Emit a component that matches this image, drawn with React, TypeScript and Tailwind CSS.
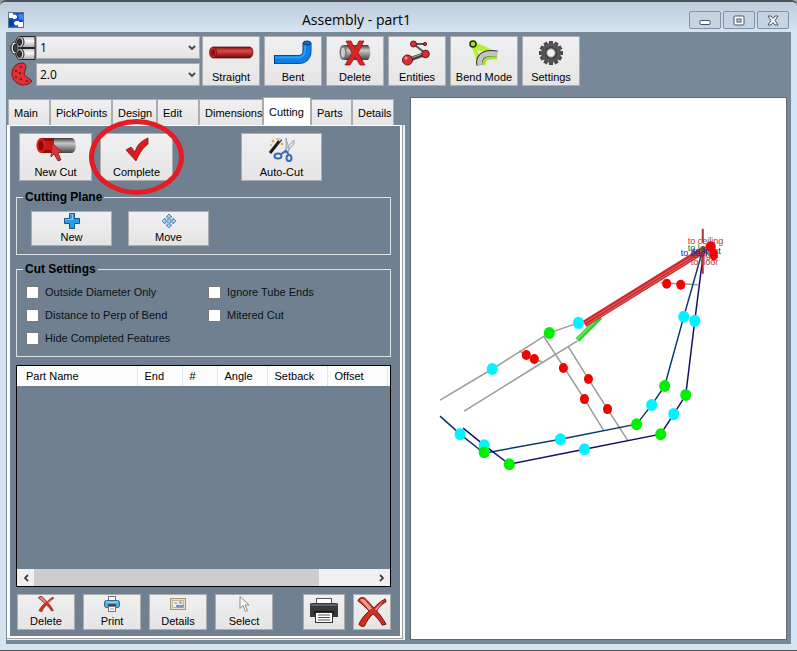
import { useState, type ReactNode } from 'react';

const TABS = [
  { name: 'Main', width: 'w-[42px]' },
  { name: 'PickPoints', width: 'w-[62px]' },
  { name: 'Design', width: 'w-[45px]' },
  { name: 'Edit', width: 'w-[42px]' },
  { name: 'Dimensions', width: 'w-[64px]' },
  { name: 'Cutting', width: 'w-[48px]' },
  { name: 'Parts', width: 'w-[41px]' },
  { name: 'Details', width: 'w-[42px]' },
];

const COLUMNS = [
  { name: 'Part Name', width: 'w-[120px]' },
  { name: 'End', width: 'w-[45px]' },
  { name: '#', width: 'w-[35px]' },
  { name: 'Angle', width: 'w-[50px]' },
  { name: 'Setback', width: 'w-[60px]' },
  { name: 'Offset', width: 'w-[60px]' },
];

const CUT_SETTINGS = [
  'Outside Diameter Only',
  'Ignore Tube Ends',
  'Distance to Perp of Bend',
  'Mitered Cut',
  'Hide Completed Features',
];

const GREEN_NODES = [[549, 333], [484, 452], [509, 464], [636, 424], [660, 434], [664, 386], [685, 395]];
const CYAN_NODES = [
  [578, 323], [492, 369], [460, 434], [484, 445], [560, 439],
  [584, 449], [651, 405], [673, 414], [683, 317], [694, 321],
];
const RED_NODES = [[526, 355], [534, 359], [563, 368], [588, 379], [584, 399], [607, 409], [666, 284], [680, 285]];

/* ---------- icons ---------- */

function AppIcon() {
  return (
    <svg className="size-4" viewBox="0 0 16 16">
      <rect x=".5" y=".5" width="15" height="15" fill="#1450c8" stroke="#5d6f8c" />
      <path d="M1 1h4v2c2-1 4 0 4 2 0 1-1 2-2 2H5V6H1z" fill="#fff" />
      <path d="M15 15h-5v-2c-2 1-4 0-4-2 0-1 1-2 3-2h2v1h4z" fill="#fff" />
      <path d="M1 8h3l2 2-1 4H1z" fill="#0a39a8" />
      <path d="M10 2h5v6l-4-1z" fill="#3d86ee" />
    </svg>
  );
}

function TubesIcon() {
  return (
    <svg className="h-6 w-[26px]" viewBox="0 0 26 24">
      <defs>
        <linearGradient id="steel" x1="0" y1="0" x2="0" y2="1">
          <stop offset="0" stopColor="#bdbdbd" />
          <stop offset=".4" stopColor="#fafafa" />
          <stop offset="1" stopColor="#a6a6a6" />
        </linearGradient>
      </defs>
      <g stroke="#222">
        <ellipse cx="4.500" cy="12" rx="3.500" ry="6" fill="#ddd" />
        <ellipse cx="5" cy="12" rx="1.500" ry="4" fill="#444" />
        <path d="M10 .5h15v11H10z" fill="url(#steel)" />
        <path d="M10 12.500h15v11H10z" fill="url(#steel)" />
        <ellipse cx="10" cy="6" rx="4" ry="5.500" fill="#ccc" />
        <ellipse cx="9.500" cy="6" rx="2" ry="3.500" fill="#333" />
        <ellipse cx="10" cy="18" rx="4" ry="5.500" fill="#ccc" />
        <ellipse cx="9.500" cy="18" rx="2" ry="3.500" fill="#333" />
      </g>
    </svg>
  );
}

function DieIcon() {
  return (
    <svg className="h-6 w-[26px]" viewBox="0 0 26 24">
      <path d="M12 1c3 0 4 2 4 4l-2 7c1 3 5 4 8 7-2 3-6 4-10 4C6 22 2 17 2 12 2 6 6 1 12 1z" fill="#e0303a" stroke="#7c1418" />
      <g fill="#6d0f14">
        <circle cx="11" cy="5" r="1" /><circle cx="6" cy="9" r="1" /><circle cx="10" cy="11" r="1" />
        <circle cx="6" cy="15" r="1" /><circle cx="11" cy="17" r="1" /><circle cx="17" cy="19" r="1" />
      </g>
    </svg>
  );
}

function StraightIcon() {
  return (
    <svg className="h-[26px] w-[46px]" viewBox="0 0 46 26">
      <defs>
        <linearGradient id="redTube" x1="0" y1="0" x2="0" y2="1">
          <stop offset="0" stopColor="#7e1010" />
          <stop offset=".35" stopColor="#e04848" />
          <stop offset="1" stopColor="#6b0808" />
        </linearGradient>
      </defs>
      <path d="M5 7h37c4 1 4 9 0 11H5z" fill="url(#redTube)" stroke="#5c0b0b" strokeWidth=".7" />
      <ellipse cx="5" cy="12.500" rx="3.500" ry="5.500" fill="#c22b2b" stroke="#5c0b0b" strokeWidth=".7" />
      <ellipse cx="5" cy="12.500" rx="2" ry="3.500" fill="#8a1111" />
    </svg>
  );
}

function BentIcon() {
  return (
    <svg className="h-[26px] w-[42px]" viewBox="0 0 42 26">
      <path d="M2 19.500h24c6 0 9-3 9-9V3" fill="none" stroke="#0b3c78" strokeWidth="9" />
      <path d="M3 19.500h23c6 0 9-3 9-9V3" fill="none" stroke="#0c80e4" strokeWidth="7.500" />
      <path d="M3 17.500h23c4 0 7-3 7-7V4" fill="none" stroke="#2a9cf5" strokeWidth="2" />
      <ellipse cx="35" cy="3" rx="4" ry="2" fill="#1667b8" stroke="#0b3c78" />
    </svg>
  );
}

function DeleteTubeIcon() {
  return (
    <svg className="h-[26px] w-8" viewBox="0 0 32 26">
      <defs>
        <linearGradient id="grayTube" x1="0" y1="0" x2="0" y2="1">
          <stop offset="0" stopColor="#3a3a3a" />
          <stop offset=".35" stopColor="#c9c9c9" />
          <stop offset="1" stopColor="#444" />
        </linearGradient>
      </defs>
      <path d="M4 5h25c3 3 3 12 0 15H4z" fill="url(#grayTube)" />
      <ellipse cx="4" cy="12.500" rx="3.500" ry="7.500" fill="#777" />
      <ellipse cx="4" cy="12.500" rx="2" ry="5" fill="#ccc" />
      <path d="M7 1h5l4 8 4-8h5l-6 12 7 12h-5l-5-8-5 8H6l7-12z" fill="#dc2424" stroke="#8d1010" strokeWidth=".7" />
    </svg>
  );
}

function EntitiesIcon() {
  return (
    <svg className="h-[26px] w-8" viewBox="0 0 32 26">
      <path d="M13 4h11M14 5l11 9" fill="none" stroke="#555" strokeWidth="2" />
      <path d="M7 20l17-6" stroke="#444" strokeWidth="4" />
      <path d="M7 19l17-6" stroke="#aaa" strokeWidth="1" />
      <g fill="#d93038" stroke="#6d1014">
        <circle cx="6.500" cy="20" r="5" /><circle cx="24.500" cy="14" r="3.800" />
        <circle cx="12.500" cy="4" r="3" /><circle cx="24" cy="4" r="1.600" />
      </g>
      <circle cx="5" cy="18" r="1.500" fill="#ff8d8d" />
    </svg>
  );
}

function BendModeIcon() {
  return (
    <svg className="h-[26px] w-8" viewBox="0 0 32 26">
      <path d="M3 5l7 20 4-8L29 12 7 2z" fill="#b4ee38" />
      <path d="M9 10l3 8 7-5z" fill="#ececec" />
      <path d="M12 25c-2-9 5-13 17-11" fill="none" stroke="#333" strokeWidth="7" />
      <path d="M12 25c-2-9 5-13 17-11" fill="none" stroke="#c4c4c4" strokeWidth="5" />
      <path d="M16 25c-1-6 4-8 13-7" fill="none" stroke="#a6e22a" strokeWidth="3" />
      <circle cx="5" cy="4" r="3" fill="#a6e22a" stroke="#22330a" strokeWidth="1.500" />
    </svg>
  );
}

function GearIcon() {
  const teeth = Array.from({ length: 12 }, (_, i) => i * 30);
  return (
    <svg className="size-[26px]" viewBox="0 0 26 26">
      <g fill="#4a4a4a">
        {teeth.map((a) => <rect key={a} x="11" y="1" width="4" height="6" transform={`rotate(${a} 13 13)`} />)}
      </g>
      <circle cx="13" cy="13" r="10" fill="#555" />
      <circle cx="13" cy="13" r="6" fill="#3b3b3b" />
      <circle cx="13" cy="13" r="4.200" fill="#f0f0f0" stroke="#999" />
    </svg>
  );
}

function NewCutIcon() {
  return (
    <svg className="h-[26px] w-[42px]" viewBox="0 0 42 26">
      <path d="M17 2h20c5 1 5 14 0 15H17z" fill="url(#grayTube)" />
      <path d="M6 2h13v15H6z" fill="#c41a1a" />
      <path d="M6 2h13v3H6zM6 14h13v3H6z" fill="#8e0d0d" />
      <ellipse cx="6" cy="9.500" rx="4.500" ry="7.500" fill="#dc1b1b" />
      <ellipse cx="6" cy="9.500" rx="2.500" ry="5" fill="#8a0a0a" />
      <path d="M17 7l10 9-4 1 3 7-3 1-4-7-3 3z" fill="#d8343a" stroke="#7d2020" strokeWidth=".8" />
    </svg>
  );
}

function CheckIcon() {
  return (
    <svg className="h-[26px] w-6" viewBox="0 0 24 26">
      <path d="M1 14l5-3 4 5c2-7 6-11 13-14v6c-5 4-8 8-12 17z" fill="#dc1c20" stroke="#85161a" strokeWidth=".8" />
    </svg>
  );
}

function AutoCutIcon() {
  return (
    <svg className="h-[26px] w-7" viewBox="0 0 28 26">
      <path d="M2 17L13 3" stroke="#1c1c1c" strokeWidth="3" />
      <path d="M11 5l2-3" stroke="#ddd" strokeWidth="2" />
      <g fill="#e8a552">
        <circle cx="5" cy="5" r="1.500" /><circle cx="9" cy="3" r="1" /><circle cx="14" cy="8" r="1.300" /><circle cx="3" cy="9" r="1" />
      </g>
      <path d="M18 2v12l2 3 1-4zM26 4L15 16l3 1 8-9z" fill="#dbe3ea" stroke="#8594a3" strokeWidth=".8" />
      <g fill="none" stroke="#3769bd" strokeWidth="2">
        <ellipse cx="10" cy="20" rx="3.500" ry="2.500" /><ellipse cx="21" cy="22" rx="2.500" ry="3" />
        <path d="M13 18l5-3 3 4" />
      </g>
    </svg>
  );
}

function PlusIcon() {
  return (
    <svg className="size-4" viewBox="0 0 16 16">
      <path d="M5.500.5h5v5h5v5h-5v5h-5v-5h-5v-5h5z" fill="#2f9be0" stroke="#12588f" />
      <path d="M6.500 1.500h2v5h-7v1" fill="none" stroke="#83cdf5" />
    </svg>
  );
}

function MoveIcon() {
  return (
    <svg className="size-4" viewBox="0 0 16 16">
      <path
        d="M8 1l3 3H9v3h3V5l3 3-3 3V9H9v3h2l-3 3-3-3h2V9H4v2L1 8l3-3v2h3V4H5z"
        fill="#a8d0ee" stroke="#4c83b2" strokeWidth=".9"
      />
    </svg>
  );
}

function CrossIcon({ className }: { className: string }) {
  return (
    <svg className={className} viewBox="0 0 32 32">
      <path d="M1 4c1-3 4-4 7-3 4 4 7 7 10 11 3-4 7-7 12-10l1 3c-5 3-8 6-10 10 4 4 7 9 10 14l-4 1c-3-5-6-9-10-12-4 4-7 8-9 13-2 1-5 0-6-2 3-6 6-10 11-14C9 11 5 7 1 4z" fill="#d3301f" stroke="#5e120c" />
      <path d="M3 3c2-1 3-1 5 0l8 9-3 2C10 10 7 7 3 3zM28 4L19 13l2 1z" fill="#ef9b90" />
    </svg>
  );
}

function PrintIcon() {
  return (
    <svg className="size-4" viewBox="0 0 16 16">
      <rect x="4.500" y=".5" width="7" height="5" fill="#fff" stroke="#777" />
      <rect x=".5" y="4.500" width="15" height="7" rx="2" fill="#58a9d4" stroke="#286a93" />
      <path d="M2 6h12" stroke="#b8e2f6" />
      <rect x="4" y="8" width="8" height="2" fill="#24506b" />
      <rect x="4.500" y="10.500" width="7" height="5" fill="#fff" stroke="#777" />
      <path d="M6 13h4" stroke="#999" />
    </svg>
  );
}

function CardIcon() {
  return (
    <svg className="size-4" viewBox="0 0 16 16">
      <rect x=".5" y="2.500" width="15" height="11" fill="#e8dfc8" stroke="#a8977a" />
      <rect x="2.500" y="4.500" width="11" height="7" fill="#f6f1e4" stroke="#c4b597" />
      <circle cx="10.500" cy="6.500" r="1.500" fill="#b3a180" />
      <path d="M4 7h3M6 10l2-1 2 1 3-1v2H7z" stroke="#5d8fb5" fill="#8cb2cd" />
    </svg>
  );
}

function PointerIcon() {
  return (
    <svg className="size-4" viewBox="0 0 16 16">
      <path d="M4 .5v12l3-3 2.500 6 2-1L9 9h4z" fill="#fff" stroke="#888" />
    </svg>
  );
}

function BigPrinterIcon() {
  return (
    <svg className="h-7 w-[30px]" viewBox="0 0 30 28">
      <rect x="7.500" y=".5" width="15" height="7" fill="#fff" stroke="#555" />
      <path d="M1 7c0-2 1-2 3-2h22c2 0 3 0 3 2v12H1z" fill="#383838" />
      <path d="M2 7h26" stroke="#8b8b8b" />
      <rect x="5" y="13" width="20" height="3" fill="#111" />
      <rect x="6.500" y="14.500" width="17" height="10" fill="#fff" stroke="#333" />
      <path d="M9 17h12M9 19.500h12M9 22h12" stroke="#555" />
    </svg>
  );
}

/* ---------- controls ---------- */

interface ToolButtonProps {
  icon: ReactNode;
  label?: string;
  ariaLabel?: string;
  className: string;
}

function ToolButton({ icon, label, ariaLabel, className }: ToolButtonProps) {
  return (
    <button
      type="button"
      aria-label={ariaLabel}
      className={`flex shrink-0 flex-col items-center border border-[#adadad] bg-linear-to-b from-[#f0f0f0] to-[#e5e5e5] text-black ${className}`}
    >
      <span className="flex flex-1 items-center justify-center">{icon}</span>
      {label && <span className="h-4 leading-4 whitespace-nowrap">{label}</span>}
    </button>
  );
}

function Combo({ label, value, options }: { label: string; value: string; options: string[] }) {
  return (
    <div className="relative">
      <select
        aria-label={label}
        defaultValue={value}
        className="block h-[23px] w-full appearance-none border border-[#acacac] bg-linear-to-b from-[#f0f0f0] to-[#e5e5e5] px-[3px] font-['Open_Sans',sans-serif] text-xs text-black"
      >
        {options.map((o) => <option key={o}>{o}</option>)}
      </select>
      <svg className="pointer-events-none absolute top-2 right-1 h-2 w-2" viewBox="0 0 8 8">
        <path d="M1 2l3 3 3-3" fill="none" stroke="#444" strokeWidth="1.800" />
      </svg>
    </div>
  );
}

function WindowButton({ label, children }: { label: string; children: ReactNode }) {
  return (
    <button
      type="button"
      aria-label={label}
      className="flex h-[18px] w-8 items-center justify-center rounded-[2px] border border-[#8392aa] bg-[#c6d3e1]"
    >
      <svg className="h-[11px] w-3" viewBox="0 0 12 11">{children}</svg>
    </button>
  );
}

function Group({ title, children }: { title: string; children: ReactNode }) {
  return (
    <fieldset className="min-w-0 border border-[#dce1e6] pb-1.5">
      <legend className="ml-1.5 h-4 px-0.5 text-xs leading-4 font-bold text-black">{title}</legend>
      {children}
    </fieldset>
  );
}

/* ---------- drawing ---------- */

function Nodes({ points, color, rx, ry }: { points: number[][]; color: string; rx: number; ry: number }) {
  return (
    <g fill={color}>
      {points.map(([x, y]) => <ellipse key={`${x}-${y}`} cx={x} cy={y} rx={rx} ry={ry} />)}
    </g>
  );
}

function ModelView() {
  return (
    <svg className="block h-full w-full" viewBox="411 99 374 539" role="img" aria-label="Frame model">
      <g fill="none" stroke="#9b9b9b" strokeWidth="1.500">
        <path d="M440 400L492 369L549 333L578 323" />
        <path d="M464 411L530 370L577 341" />
        <path d="M543 336L564 368L584 399L603 430" />
        <path d="M568 347L588 379L607 409L627 440" />
        <path d="M519 351L527 355M534 359L542 362M660 283L697 285" />
      </g>
      <path d="M440 416L460 434L484 453L560 439L636 424L651 405L664 386L683 317L702 250" fill="none" stroke="#0b3a66" strokeWidth="1.500" />
      <path d="M463 428L484 445L509 464L584 449L660 434L673 414L685 395L694 321L703 250" fill="none" stroke="#12126e" strokeWidth="1.500" />
      <path d="M577 340L600 317" stroke="#2ed52e" strokeWidth="5" />
      <path d="M577 339L599 317" stroke="#8be88b" strokeWidth="1" />
      <path d="M584 324L705 249" stroke="#cf262b" strokeWidth="7" />
      <path d="M584 323L704 249M586 325L705 251" stroke="#e0686b" strokeWidth="1" />
      <path d="M702 229v14M702 247v27" stroke="#b2343a" strokeWidth="2" />
      <g fontSize="9" fontFamily="Liberation Sans, sans-serif">
        <text x="687" y="244" fill="#b5373c">to ceiling</text>
        <text x="687" y="251" fill="#1e6e4a">to left</text>
        <text x="692" y="254" fill="#1a1aa0">to front</text>
        <text x="680" y="256" fill="#1a1aa0">to back</text>
        <text x="690" y="258" fill="#8c2f35">to right</text>
        <text x="690" y="265" fill="#b5373c">to floor</text>
      </g>
      <Nodes points={CYAN_NODES} color="#00f4ff" rx={5.5} ry={6} />
      <Nodes points={GREEN_NODES} color="#00f000" rx={5.5} ry={6} />
      <Nodes points={RED_NODES} color="#f50000" rx={4.5} ry={5} />
      <ellipse cx="710" cy="247" rx="5" ry="5.500" fill="#f50000" />
      <ellipse cx="713" cy="255" rx="4" ry="6" fill="#f50000" />
    </svg>
  );
}

/* ---------- window ---------- */

export default function App() {
  const [tab, setTab] = useState('Cutting');

  return (
    <div className="bg-[#9b9d9c]">
      <div className="flex min-h-screen flex-col rounded-t-md border-t-2 border-b border-[#4d5258] bg-[#d6e3f1] px-1.5 pb-1.5 font-['Liberation_Sans',Arial,sans-serif] text-[11px] text-black">
        <header className="-mx-1.5 flex h-[30px] items-center justify-between rounded-t-md bg-linear-to-b from-[#bdccdb] to-[#d6e3f1] px-2">
          <div className="pt-1.5"><AppIcon /></div>
          <h1 className="pt-1.5 font-['Open_Sans',sans-serif] text-sm">Assembly - part1</h1>
          <div className="flex gap-0.5 pt-1.5">
            <WindowButton label="Minimize"><rect x="1" y="5.500" width="10" height="4" rx="1" fill="#fff" stroke="#4a5262" /></WindowButton>
            <WindowButton label="Maximize">
              <rect x="1" y="1" width="10" height="9" rx="1" fill="#fff" stroke="#4a5262" />
              <rect x="4" y="4" width="4" height="3" fill="#c6d3e1" stroke="#4a5262" />
            </WindowButton>
            <WindowButton label="Close">
              <path d="M1 1h3l2 2.500L8 1h3L8 5.500l3 4.500H8L6 7.500 4 10H1l3-4.500z" fill="#fff" stroke="#4a5262" />
            </WindowButton>
          </div>
        </header>

        <main className="flex flex-1 flex-col bg-[#778899] pt-1 pr-1 pb-1 pl-px">
          <div className="flex">
            <div className="flex w-[195px] shrink-0 pr-0.5 pl-[3px]">
              <div className="flex shrink-0 flex-col justify-between">
                <TubesIcon />
                <DieIcon />
              </div>
              <div className="flex flex-1 flex-col gap-1">
                <Combo label="Part" value="1" options={['1', '2', '3']} />
                <Combo label="Die" value="2.0" options={['1.5', '1.75', '2.0']} />
              </div>
            </div>
            <div className="flex gap-1">
              <ToolButton className="h-[50px] w-[58px]" icon={<StraightIcon />} label="Straight" />
              <ToolButton className="h-[50px] w-[58px]" icon={<BentIcon />} label="Bent" />
              <ToolButton className="h-[50px] w-[58px]" icon={<DeleteTubeIcon />} label="Delete" />
              <ToolButton className="h-[50px] w-[58px]" icon={<EntitiesIcon />} label="Entities" />
              <ToolButton className="h-[50px] w-[68px]" icon={<BendModeIcon />} label="Bend Mode" />
              <ToolButton className="h-[50px] w-[58px]" icon={<GearIcon />} label="Settings" />
            </div>
          </div>

          <div className="mt-[11px] flex flex-1 gap-[5px]">
            <section className="flex w-[398px] shrink-0 flex-col">
              <div role="tablist" className="flex h-7 items-end pl-px">
                {TABS.map((t) => (
                  <button
                    key={t.name}
                    type="button"
                    role="tab"
                    aria-selected={tab === t.name}
                    onClick={() => setTab(t.name)}
                    className={`border border-b-0 border-[#acacac] pt-px pl-[5px] text-left whitespace-nowrap ${t.width} ${
                      tab === t.name ? 'h-7 bg-white' : 'h-[26px] bg-linear-to-b from-[#f0f0f0] to-[#e5e5e5]'
                    }`}
                  >
                    {t.name}
                  </button>
                ))}
              </div>

              <div className="flex flex-1 border-r-2 border-b border-[#eef1f5]">
                <div className="flex flex-1 border-r border-b border-[#a0a0a0]">
                  <div className="flex flex-1 flex-col border-t border-r-2 border-b-2 border-l-[3px] border-white bg-[#708090] pt-[7px] pr-[9px] pb-1.5 pl-1.5">
                    <div className="flex px-[3px]">
                      <ToolButton className="h-12 w-[73px]" icon={<NewCutIcon />} label="New Cut" />
                      <div className="relative ml-2">
                        <ToolButton className="h-12 w-[73px]" icon={<CheckIcon />} label="Complete" />
                        {/* highlight ring around the button */}
                        <div className="pointer-events-none absolute -inset-x-[11px] -inset-y-3.5 rounded-[50%] border-[5px] border-[#e51c23]" />
                      </div>
                      <ToolButton className="ml-[68px] h-12 w-[81px]" icon={<AutoCutIcon />} label="Auto-Cut" />
                    </div>

                    <div className="mt-2 flex flex-col gap-1.5">
                      <Group title="Cutting Plane">
                        <div className="flex gap-4 px-3.5 pt-1.5 pb-0.5">
                          <ToolButton className="h-[35px] w-[81px]" icon={<PlusIcon />} label="New" />
                          <ToolButton className="h-[35px] w-[81px]" icon={<MoveIcon />} label="Move" />
                        </div>
                      </Group>
                      <Group title="Cut Settings">
                        <div className="grid grid-cols-2 pt-1 pl-[9px] text-[#0c1116]">
                          {CUT_SETTINGS.map((s) => (
                            <label key={s} className="flex h-[23px] items-center gap-1.5">
                              <input type="checkbox" className="size-[13px] appearance-none border border-[#7b7b7b] bg-white checked:bg-[#3a6ea5]" />
                              {s}
                            </label>
                          ))}
                        </div>
                      </Group>
                    </div>

                    <div className="mt-2 flex min-h-[120px] flex-1 flex-col justify-between border border-black">
                      <table className="w-full table-fixed border-collapse bg-[#fcfcfc]">
                        <thead>
                          <tr className="h-5">
                            {COLUMNS.map((c) => (
                              <th key={c.name} scope="col" className={`border-r border-[#dfe8f2] p-0 pt-px pl-[7px] text-left font-normal first:pl-[9px] ${c.width}`}>
                                {c.name}
                              </th>
                            ))}
                            <td />
                          </tr>
                        </thead>
                      </table>
                      <div className="flex h-[17px] bg-[#f0f0f0]">
                        <button type="button" aria-label="Scroll left" className="flex w-[17px] items-center justify-center">
                          <svg className="size-2" viewBox="0 0 8 8"><path d="M6 1L3 4l3 3" fill="none" stroke="#444" strokeWidth="1.800" /></svg>
                        </button>
                        <div className="flex-1"><div className="h-full w-[84%] bg-[#cdcdcd]" /></div>
                        <button type="button" aria-label="Scroll right" className="flex w-[17px] items-center justify-center">
                          <svg className="size-2" viewBox="0 0 8 8"><path d="M2 1l3 3-3 3" fill="none" stroke="#444" strokeWidth="1.800" /></svg>
                        </button>
                      </div>
                    </div>

                    <div className="mt-[7px] flex gap-2 pl-px">
                      <ToolButton className="h-9 w-[58px]" icon={<CrossIcon className="size-4" />} label="Delete" />
                      <ToolButton className="h-9 w-[58px]" icon={<PrintIcon />} label="Print" />
                      <ToolButton className="h-9 w-[58px]" icon={<CardIcon />} label="Details" />
                      <ToolButton className="h-9 w-[58px]" icon={<PointerIcon />} label="Select" />
                      <ToolButton className="ml-auto h-9 w-[42px]" icon={<BigPrinterIcon />} ariaLabel="Print all" />
                      <ToolButton className="h-9 w-[38px]" icon={<CrossIcon className="size-[30px]" />} ariaLabel="Delete all" />
                    </div>
                  </div>
                </div>
              </div>
            </section>

            <section className="relative flex-1 border border-[#5f6a70] bg-white">
              {/* out of flow so the drawing never stretches the window */}
              <div className="absolute inset-0"><ModelView /></div>
            </section>
          </div>
        </main>
      </div>
    </div>
  );
}
